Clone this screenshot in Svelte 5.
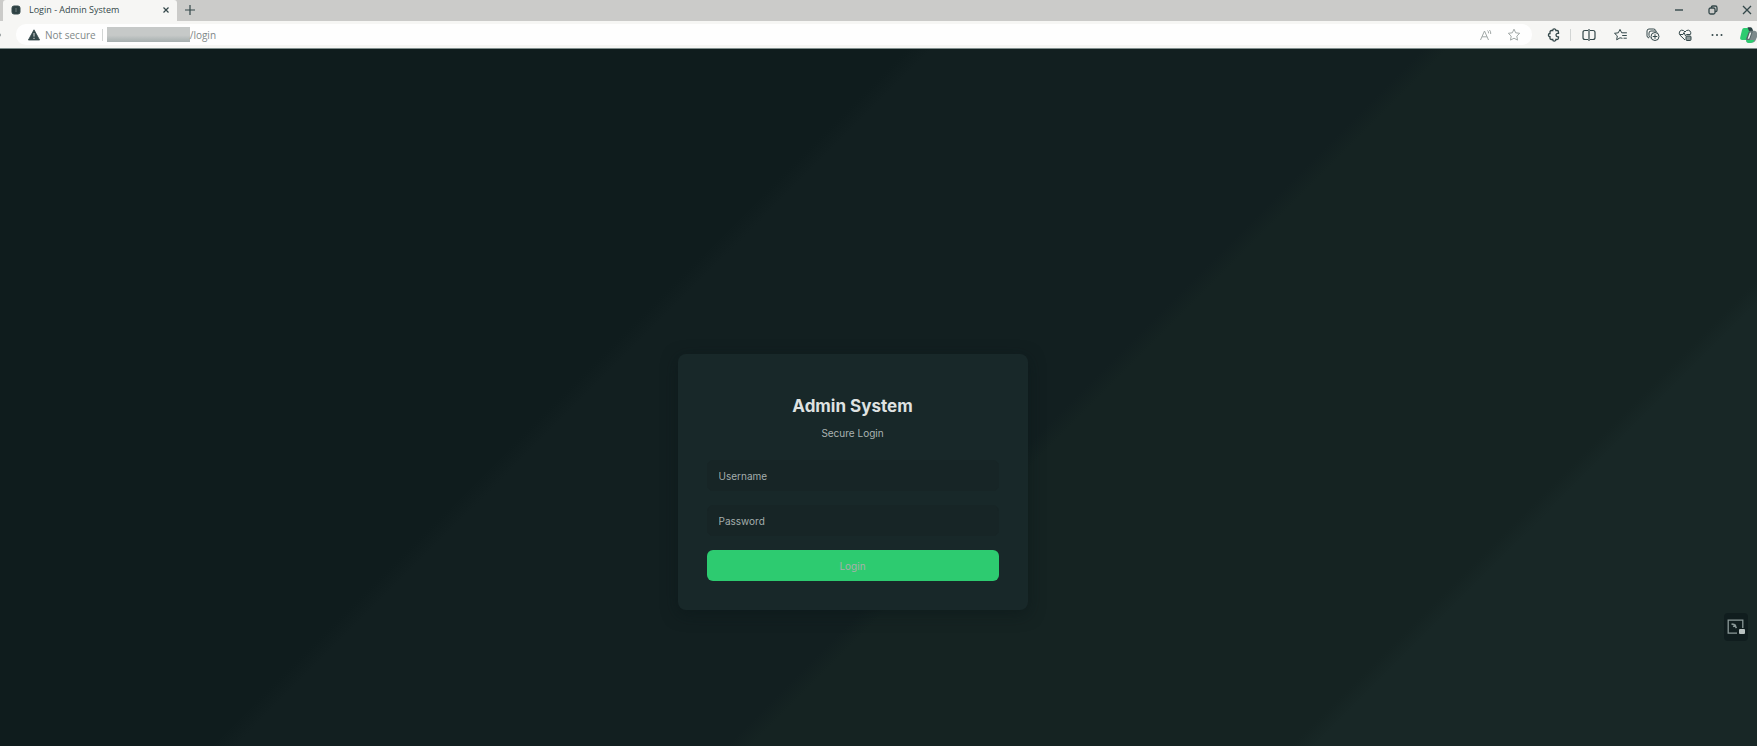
<script lang="ts">
  let username = $state('');
  let password = $state('');

  function onsubmit(e: SubmitEvent) {
    e.preventDefault();
  }
</script>

<div class="window">
  <div class="tabs">
    <div class="tab">
      <svg class="favicon" viewBox="0 0 10 10" width="10" height="10">
        <rect x="1" y="1" width="8" height="8" rx="2" fill="#2e4143" />
        <path d="M5 3v4" stroke="#6d7c7d" />
      </svg>
      <span class="tab-title">Login - Admin System</span>
      <button aria-label="Close tab">
        <svg viewBox="0 0 8 8" width="8" height="8"><path d="M1.5 1.5l5 5M6.5 1.5l-5 5" stroke-width="1.2" /></svg>
      </button>
    </div>
    <button class="new-tab" aria-label="New tab">
      <svg viewBox="0 0 12 12" width="12" height="12"><path d="M6 1v10M1 6h10" stroke-width="1.2" /></svg>
    </button>
    <div class="controls">
      <button aria-label="Minimize">
        <svg viewBox="0 0 12 12" width="12" height="12"><path d="M2 6h8" stroke-width="1.4" /></svg>
      </button>
      <button aria-label="Restore">
        <svg viewBox="0 0 12 12" width="12" height="12">
          <rect x="2" y="4" width="6" height="6" rx="1.5" stroke-width="1.3" />
          <path d="M4.5 4V3.2q0-1.2 1.2-1.2h2.6q1.7 0 1.7 1.7v2.5q0 1.3-1.3 1.3H8" stroke-width="1.3" />
        </svg>
      </button>
      <button aria-label="Close window">
        <svg viewBox="0 0 12 12" width="12" height="12"><path d="M2 2l8 8M10 2l-8 8" stroke-width="1.3" /></svg>
      </button>
    </div>
  </div>

  <div class="toolbar">
    <button class="reload" aria-label="Refresh">
      <svg viewBox="0 0 4 10" width="4" height="10"><path d="M-2 3q2.500 0 2.500 2t-2.500 2" stroke="#8c9494" /></svg>
    </button>
    <div class="address">
      <svg class="warn" viewBox="0 0 12 12" width="12" height="12">
        <path d="M6 .8L11.6 11H.4z" fill="#34484a" stroke="#34484a" stroke-linejoin="round" stroke-width=".8" />
        <path d="M6 4v3.6M6 8.8v1.2" stroke="#d8dddc" />
      </svg>
      <span class="insecure">Not secure</span>
      <span class="host"></span>
      <span class="path">/login</span>
      <div class="address-actions">
        <button aria-label="Read aloud">
          <svg viewBox="0 0 16 16" width="16" height="16">
            <path d="M2.5 13L6.5 4 10.500 13M4 9.800h5M9.500 3.500q1.300 1 1 2.800M11.500 3q1.500 1.500 1.200 4" />
          </svg>
        </button>
        <button aria-label="Add to favorites">
          <svg viewBox="0 0 16 16" width="16" height="16">
            <path d="M8 2.2l1.7 3.6 4 .5-2.9 2.8.7 4L8 11.2l-3.5 1.9.7-4-2.9-2.8 4-.5z" />
          </svg>
        </button>
      </div>
    </div>
    <div class="actions">
      <button aria-label="Extensions">
        <svg viewBox="0 0 16 16" width="16" height="16">
          <path d="M5.500 3.500h1.200a1.600 1.600 0 0 1 3.200 0h1.100q1.500 0 1.500 1.500v1.400h-.8a1.700 1.700 0 0 0 0 3.400h.8v1.200q0 1.500-1.500 1.500H9.900a1.600 1.600 0 0 1-3.200 0H5.500Q4 12.500 4 11V9.700a1.600 1.600 0 0 1 0-3.200V5q0-1.500 1.500-1.500z" stroke-width="1.300" />
        </svg>
      </button>
      <span class="rule"></span>
      <button aria-label="Split screen">
        <svg viewBox="0 0 16 16" width="16" height="16">
          <path d="M7 3.5H4q-2 0-2 2v5q0 2 2 2h3M9 3.5h3q2 0 2 2v5q0 2-2 2H9M8 2v12" stroke-width="1.2" />
        </svg>
      </button>
      <button aria-label="Favorites">
        <svg viewBox="0 0 16 16" width="16" height="16">
          <path d="M9.5 11.3L7 10.8l-3.3 2 .6-3.9-2.8-2.6 3.8-.5L7 2.4l1.7 3.4h5.2M9.2 8.5h4.6M10.5 11.2h3.3" />
        </svg>
      </button>
      <button aria-label="Collections">
        <svg viewBox="0 0 16 16" width="16" height="16">
          <path d="M4 11Q2 10.5 2 8.8V4q0-2 2-2h4.6q1.8 0 2.2 1.7" />
          <path d="M5.5 10.8Q4 10 4 8.5V6q0-2 2-2h4q1.6 0 2 1.5" />
          <circle cx="10" cy="9.5" r="4" />
          <path d="M10 7.2v4.6M7.7 9.5h4.6" />
        </svg>
      </button>
      <button aria-label="Browser essentials">
        <svg viewBox="0 0 16 16" width="16" height="16">
          <path d="M8 13L3 8.2Q1.5 6.2 2.8 4.2 4.3 2.5 6.5 3.5L8 5l1.5-1.5q2.2-1 3.7.7 1 1.4.4 3.1" />
          <path d="M3 7.5h3l1-2 1.5 3.3 1-1.3h4" />
          <rect x="9" y="9" width="5" height="4.5" rx="1" fill="#8e9a9a" />
        </svg>
      </button>
      <button aria-label="Settings and more">
        <svg viewBox="0 0 16 16" width="16" height="16">
          <g fill="#34484a" stroke="none"><circle cx="3.5" cy="8" r="1" /><circle cx="8" cy="8" r="1" /><circle cx="12.5" cy="8" r="1" /></g>
        </svg>
      </button>
      <button class="copilot" aria-label="Copilot">
        <svg viewBox="0 0 18 18" width="18" height="18">
          <g stroke="none">
            <path d="M5 2h7.5L8.8 12.5Q8.3 14 6.5 14H3.2Q.5 14 1.3 11L3 4Q3.5 2 5 2z" fill="#2dcb70" />
            <path d="M8.5 1.2h3q1.5 0 2 1.8l.6 2H10z" fill="#2b4144" />
            <path d="M11.5 4.7h4Q18 5 18 7v4l-1.5 3.6q-.6 1.8-2.5 1.8H8.5q-1.7 0-1-2z" fill="#7d8a8c" />
            <path d="M9.800 5.500h4l-3 8.200H6.800z" fill="#506365" />
            <path d="M10.800 6.500h1.600l-2.200 6.200H8.600z" fill="#eef1ef" />
            <path d="M7 14h8.5q-1 3-3.3 3H9q-1.5 0-2-3z" fill="#2dcb70" />
          </g>
        </svg>
      </button>
    </div>
  </div>

  <main>
    <form class="card" {onsubmit}>
      <h1>Admin System</h1>
      <p>Secure Login</p>
      <input type="text" placeholder="Username" aria-label="Username" bind:value={username} />
      <input type="password" placeholder="Password" aria-label="Password" bind:value={password} />
      <button class="submit" type="submit">Login</button>
    </form>
  </main>

  <button class="capture" aria-label="Visual search">
    <svg viewBox="0 0 18 16" width="18" height="16">
      <path d="M10 14.2H1.2V1.2h14.6V9" stroke="#8b9998" stroke-width="1.3" />
      <path d="M4.500 5l2.500 .500 2.500 3.500M6 7.500L9 6" stroke="#8b9998" stroke-width="1.6" />
      <rect x="12" y="10" width="6" height="5" rx="1" fill="#b9c2c1" stroke="none" />
    </svg>
  </button>
</div>

<style>
  :global(body) { margin: 0; background: #0f1c1d; }
  .window {
    display: flex;
    flex-direction: column;
    min-height: 100vh;
    overflow: hidden;
    font-family: "Open Sans", "Noto Sans", sans-serif;
  }
  button {
    display: flex;
    align-items: center;
    justify-content: center;
    flex: none;
    padding: 0;
    border: 0;
    background: transparent;
    cursor: pointer;
  }
  svg { display: block; flex: none; fill: none; stroke: #34484a; }

  .tabs {
    display: flex;
    align-items: center;
    height: 21px;
    padding: 0 4px 0 3px;
    background: #cbcbc9;
  }
  .tab {
    display: flex;
    align-items: center;
    box-sizing: border-box;
    width: 174px;
    height: 21px;
    padding: 0 7px 2px 8px;
    background: #f6f6f4;
    border-radius: 3px 3px 0 0;
  }
  .tab-title { flex: 1; margin-left: 8px; font-size: 9px; line-height: 16px; color: #34484a; white-space: nowrap; }
  .new-tab { margin: 0 0 2px 7px; }
  .controls { display: flex; gap: 22px; margin: 0 0 1px auto; }

  .toolbar {
    display: flex;
    align-items: center;
    height: 27px;
    background: #f6f6f4;
    border-bottom: 1px solid #7f8e8d;
  }
  .reload { width: 16px; justify-content: flex-start; }
  .address {
    display: flex;
    flex: 1;
    align-items: center;
    height: 21px;
    padding: 0 4px 0 12px;
    background: #fefefe;
    border-radius: 10px;
    font-size: 10px;
    line-height: 14px;
    color: #7f8888;
  }
  .insecure { padding-right: 6px; margin-left: 5px; border-right: 1px solid #d2d5d4; white-space: nowrap; line-height: 12px; }
  .host {
    width: 83px;
    height: 15px;
    margin-left: 4px;
    background: linear-gradient(#c6c9c8 55%, #a6afaf);
  }
  .address-actions { display: flex; margin-left: auto; }
  .address-actions button { width: 28px; }
  .address-actions svg { stroke: #a2a9a8; }
  .actions { display: flex; align-items: center; padding-left: 6px; }
  .actions button { width: 32px; }
  .rule { width: 1px; height: 12px; margin-right: 2px; background: #d2d5d4; }
  .actions .copilot { width: 24px; justify-content: flex-end; }

  main {
    display: flex;
    flex: 1;
    align-items: flex-start;
    justify-content: center;
    padding: 305px 52px 48px 0;
    background: linear-gradient(135deg, #0f1c1d 37%, #121f20 38%, #121f20 58%, #152322 59%, #152322 81%, #182726 82%);
    font-family: Inter, sans-serif;
  }
  .card {
    display: flex;
    flex-direction: column;
    box-sizing: border-box;
    width: 350px;
    padding: 40px 29px 29px;
    background: #182829;
    border-radius: 8px;
    box-shadow: 0 4px 16px #0a161780;
    text-align: center;
  }
  h1 { margin: 0; font-size: 17px; font-weight: 700; line-height: 24px; color: #dfe2e1; }
  p { margin: 8px 0 20px; font-size: 10px; line-height: 14px; color: #aab3b2; }
  input {
    box-sizing: border-box;
    height: 31px;
    margin-bottom: 14px;
    padding: 0 11px;
    border: 1px solid #172526;
    border-radius: 6px;
    background: #172526;
    font: 10px Inter, sans-serif;
    color: #dfe2e1;
    outline: 0;
  }
  input::placeholder { color: #a4aead; opacity: 1; }
  .submit {
    height: 31px;
    border-radius: 6px;
    background: #2dcb70;
    font: 10px Inter, sans-serif;
    color: #a9b0ab;
  }

  .capture {
    position: fixed;
    right: 9px;
    bottom: 105px;
    width: 24px;
    height: 28px;
    border-radius: 4px;
    background: #101d1e;
  }
</style>
